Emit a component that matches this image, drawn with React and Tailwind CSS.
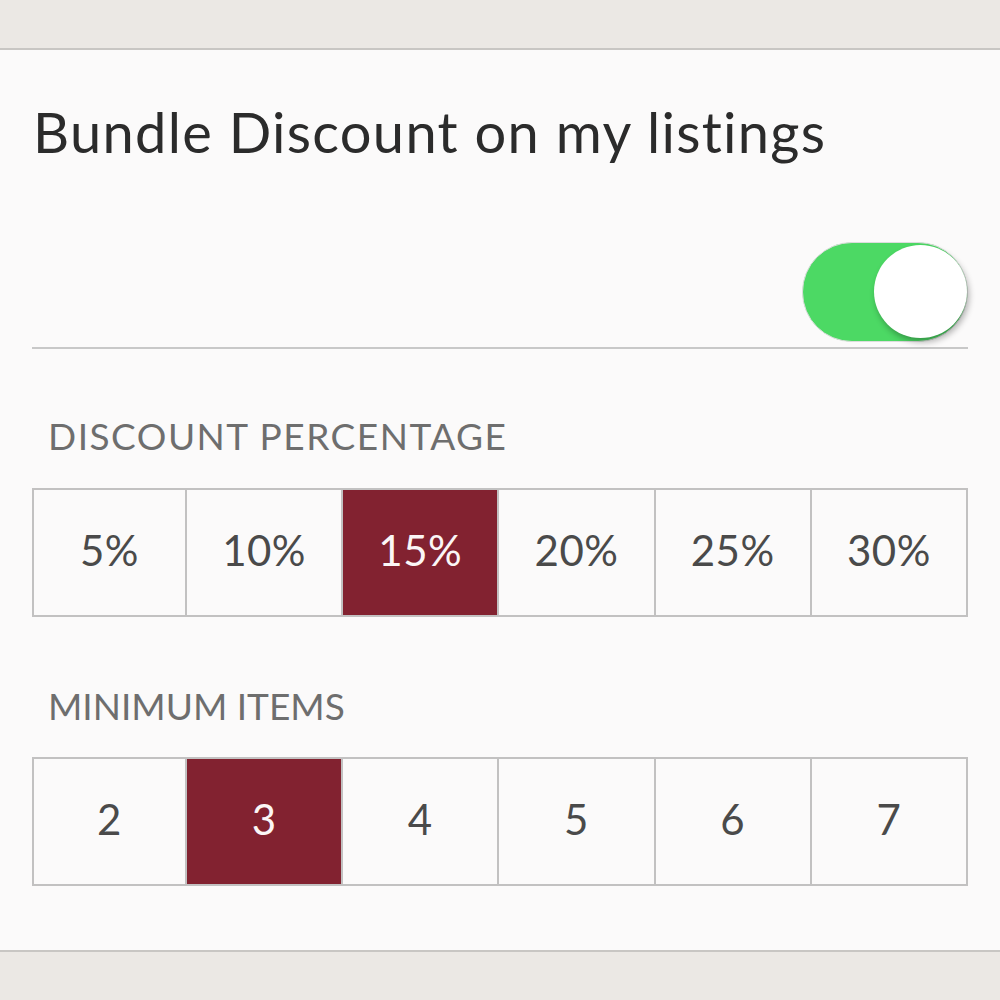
import React, { useState } from "react";

const percents = ["5%", "10%", "15%", "20%", "25%", "30%"];
const minimums = ["2", "3", "4", "5", "6", "7"];

function Segmented({ options, value, onChange }) {
  return (
    <div className="grid grid-cols-[151px_repeat(5,1fr)] h-[129px] border-2 border-[#c2c1c1]">
      {options.map((opt, i) => {
        const active = opt === value;
        return (
          <button
            key={opt}
            onClick={() => onChange(opt)}
            className={
              (i > 0 ? "border-l-2 border-[#c2c1c1] " : "") +
              (active
                ? "bg-[#822230] text-[#fbf6f6] "
                : "bg-[#fbfafa] text-[#4a4a4a] ") +
              "flex items-center justify-center pb-[5px] text-[42px] leading-none tracking-[0.5px]"
            }
          >
            {opt}
          </button>
        );
      })}
    </div>
  );
}

export default function App() {
  const [enabled, setEnabled] = useState(true);
  const [pct, setPct] = useState("15%");
  const [min, setMin] = useState("3");

  return (
    <div
      className="w-[1000px] h-[1000px] bg-[#ebe8e4] flex flex-col overflow-hidden"
      style={{ fontFamily: "Lato, 'Open Sans', sans-serif" }}
    >
      <div className="h-[48px] shrink-0" />
      <div className="h-[904px] shrink-0 bg-[#fbfafa] border-y-2 border-[#c8c6c3] px-[32px] pt-[54px]">
        <h1 className="text-[56px] leading-none text-[#2b2b2b] tracking-[1.3px] pl-[1px]">
          Bundle Discount on my listings
        </h1>

        <div className="flex justify-end mt-[82px]">
          <button
            onClick={() => setEnabled(!enabled)}
            className={
              "relative w-[166px] h-[100px] rounded-full border border-[#dcdcdc] " +
              (enabled ? "bg-[#4cd964]" : "bg-[#e5e5e5]")
            }
          >
            <span
              className={
                "absolute top-[2px] w-[93px] h-[93px] rounded-full bg-white shadow-[2px_4px_6px_rgba(0,0,0,0.3)] " +
                (enabled ? "right-0" : "left-[3px]")
              }
            />
          </button>
        </div>

        <div className="mt-[5px] h-[2px] bg-[#c8c8c8]" />

        <div className="mt-[68px] pl-[16px] text-[37px] leading-none text-[#6e6e6e] tracking-[1.5px]">
          DISCOUNT PERCENTAGE
        </div>
        <div className="mt-[34px]">
          <Segmented options={percents} value={pct} onChange={setPct} />
        </div>

        <div className="mt-[70px] pl-[16px] text-[37px] leading-none text-[#6e6e6e]">
          MINIMUM ITEMS
        </div>
        <div className="mt-[33px]">
          <Segmented options={minimums} value={min} onChange={setMin} />
        </div>
      </div>
    </div>
  );
}
